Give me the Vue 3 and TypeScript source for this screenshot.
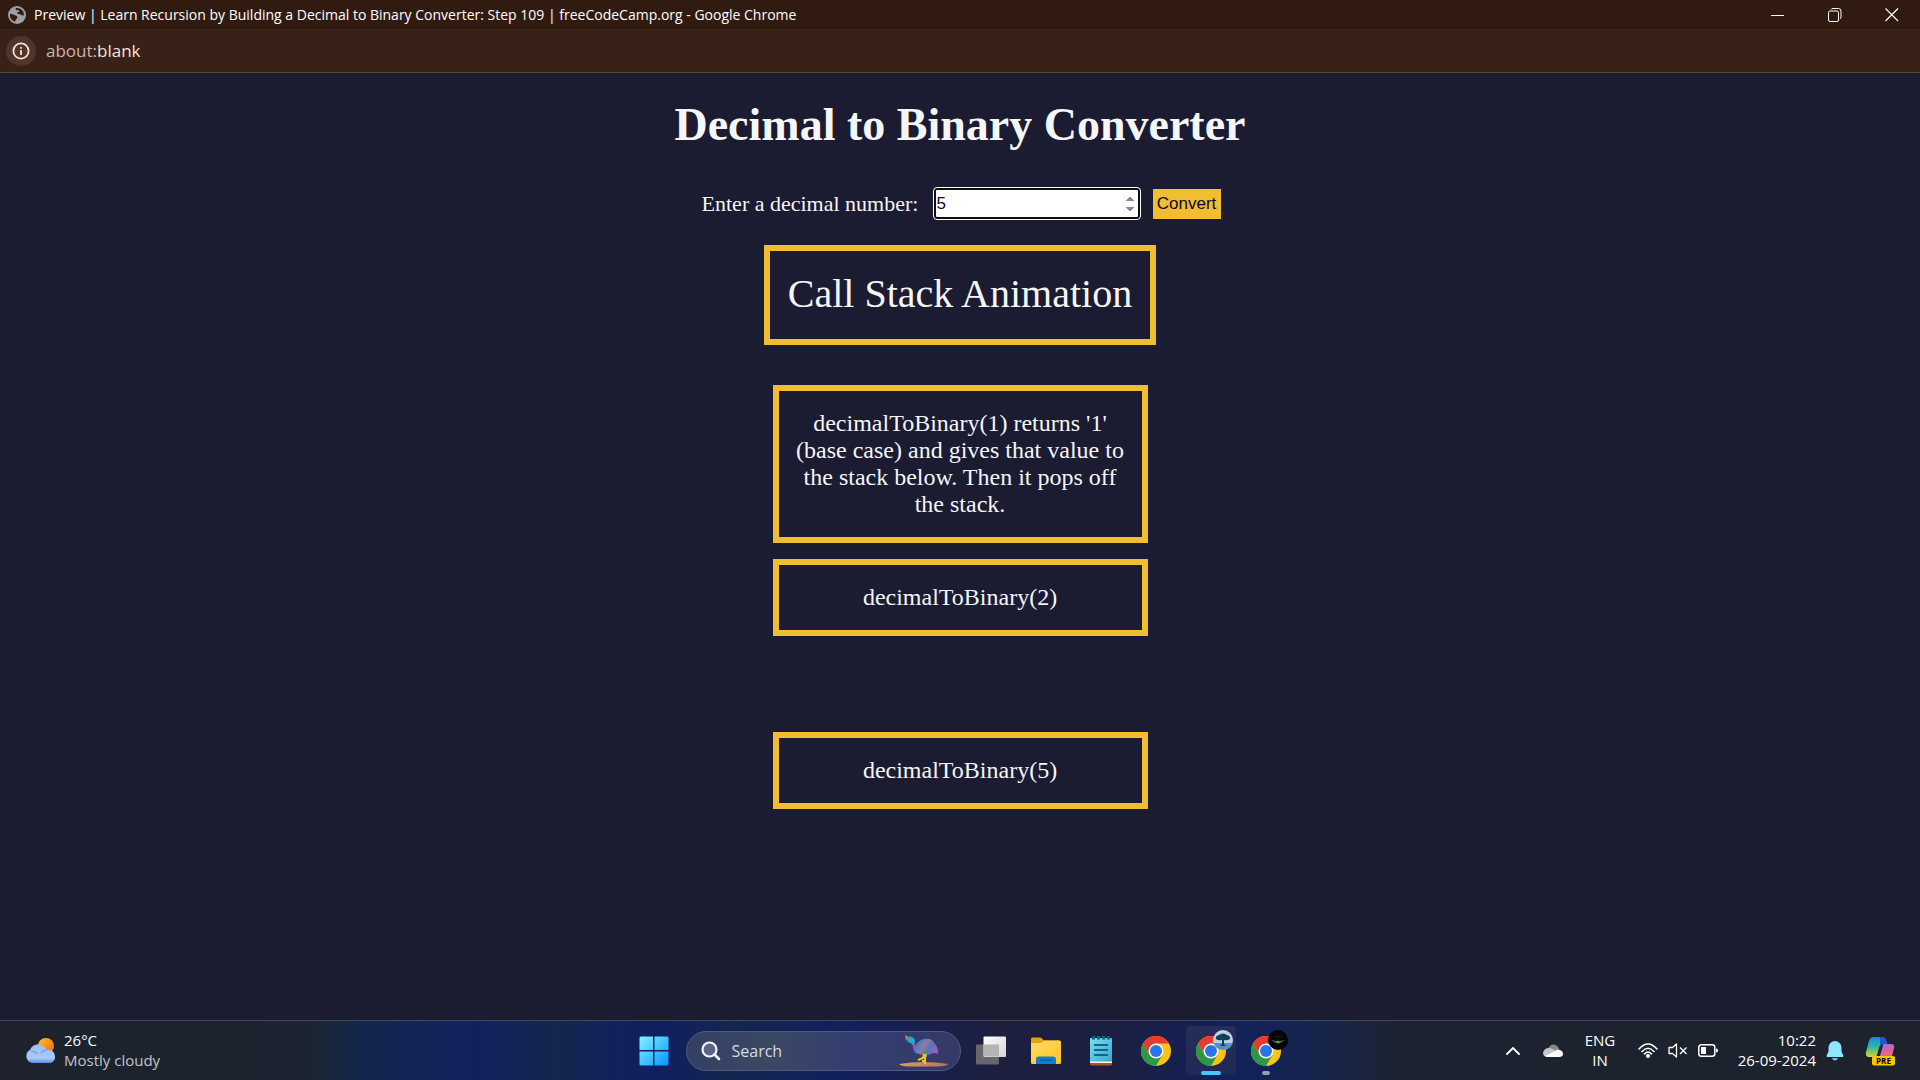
<script setup lang="ts">
import { ref } from 'vue'

interface Frame {
  id: number
  text: string
}

const decimal = ref<number>(5)

// An empty text is a frame that has already been popped off the stack.
const frames = ref<Frame[]>([
  {
    id: 1,
    text: "decimalToBinary(1) returns '1' (base case) and gives that value to the stack below. Then it pops off the stack.",
  },
  { id: 2, text: 'decimalToBinary(2)' },
  { id: 3, text: '' },
  { id: 4, text: 'decimalToBinary(5)' },
])

const chromeApps = [
  { id: 'chrome', label: 'Google Chrome', badge: '', state: '' },
  { id: 'chrome-tree', label: 'Google Chrome, profile 1', badge: 'tree', state: 'active' },
  { id: 'chrome-dark', label: 'Google Chrome, profile 2', badge: 'dark', state: 'open' },
]
</script>

<template>
  <div class="screen">
    <header class="titlebar">
      <svg class="globe" viewBox="0 0 18 18" aria-hidden="true">
        <circle cx="9" cy="9" r="9" fill="#9aa0a6" />
        <path d="M2 7.500C3 8.500 5 8 6.500 9C8 10 9.500 9.500 9.300 11.500C9 13 7.500 13 7.300 15.500C4 15 1.500 12 2 7.500ZM8 2C7 3.500 8 4.500 10 4.200C12 4 11.500 6 10 6.300C8.500 6.700 9 8 10.500 8C13 7.800 13.500 10 15.800 9.500C16.500 5 12.500 1.500 8 2Z" fill="#321b12" />
      </svg>
      <span class="window-title">Preview | Learn Recursion by Building a Decimal to Binary Converter: Step 109 | freeCodeCamp.org - Google Chrome</span>
      <div class="window-buttons">
        <button type="button" aria-label="Minimize">
          <svg viewBox="0 0 14 14"><path d="M0 7.500H13" stroke="#fff" /></svg>
        </button>
        <button type="button" aria-label="Restore">
          <svg viewBox="0 0 14 14" fill="none" stroke="#fff">
            <rect x=".5" y="3" width="10" height="10.500" rx="1.500" />
            <path d="M3 1.500Q3.500.5 5 .5H10.500Q13 .5 13 3V9Q13 10.500 11.800 11" />
          </svg>
        </button>
        <button type="button" aria-label="Close">
          <svg viewBox="0 0 14 14"><path d="M.5.5L13 13M13 .5L.5 13" stroke="#fff" stroke-width="1.200" /></svg>
        </button>
      </div>
    </header>

    <nav class="addressbar" aria-label="Address">
      <button type="button" class="site-info" aria-label="View site information">
        <svg viewBox="0 0 18 18" fill="none" stroke="#f6ddd2" stroke-width="1.800">
          <circle cx="9" cy="9" r="7.600" />
          <path d="M9 8V13M9 5V6.700" />
        </svg>
      </button>
      <span class="url"><span class="scheme">about:</span>blank</span>
    </nav>

    <main class="page">
      <h1>Decimal to Binary Converter</h1>
      <form class="converter" @submit.prevent>
        <label for="number-input">Enter a decimal number:</label>
        <input id="number-input" v-model="decimal" type="number" name="decimal" />
        <button type="submit">Convert</button>
      </form>
      <h2>Call Stack Animation</h2>
      <section class="stack" aria-label="Call stack">
        <p v-for="frame in frames" :key="frame.id" :class="['frame', { popped: !frame.text }]">{{ frame.text }}</p>
      </section>
    </main>

    <footer class="taskbar">
      <button type="button" class="weather">
        <svg viewBox="0 0 32 28" aria-hidden="true">
          <defs>
            <linearGradient id="sun" x1="0" y1="0" x2="1" y2="1"><stop stop-color="#ffc52e" /><stop offset="1" stop-color="#ec6306" /></linearGradient>
            <linearGradient id="cloud" x1="0" y1="0" x2="0" y2="1"><stop stop-color="#9cc0fa" /><stop offset=".75" stop-color="#a9c8f8" /><stop offset="1" stop-color="#5f8ae0" /></linearGradient>
          </defs>
          <circle cx="22" cy="9" r="8" fill="url(#sun)" />
          <path d="M8 26A7 7 0 0 1 6 13C8 8 13 6 17 8C20 9 22 11 23 13C28 12 31 16 31 20C31 24 28 26 25 26Z" fill="url(#cloud)" />
          <path d="M7 14Q11 14 13 17M23 13Q19 13 17 16" fill="none" stroke="#6f99e8" stroke-width="1.200" />
        </svg>
        <span class="weather-text"><span>26°C</span><span class="dim">Mostly cloudy</span></span>
      </button>

      <div class="apps">
        <button type="button" class="app" aria-label="Start">
          <svg viewBox="0 0 30 30">
            <defs><linearGradient id="start" x1="0" y1="0" x2="1" y2="1" ><stop stop-color="#83f5ff" /><stop offset="1" stop-color="#0693ff" /></linearGradient></defs>
            <path d="M2 .5H14V14H.5V2Q.5.5 2 .5ZM15.500.5H28Q29.500.5 29.500 2V14H15.500ZM.5 15.500H14V29.500H2Q.5 29.500.5 28ZM15.500 15.500H29.500V28Q29.500 29.500 28 29.500H15.500Z" fill="url(#start)" />
          </svg>
        </button>

        <div class="search">
          <svg class="magnifier" viewBox="0 0 20 20" fill="none" stroke="#f2f4fa" stroke-width="2.200" stroke-linecap="round">
            <circle cx="8.500" cy="8.500" r="7" fill="#5b6488" /><path d="M13.500 13.500L18 18" stroke-width="2.600" />
          </svg>
          <input type="text" placeholder="Search" aria-label="Search" />
          <svg class="bird" viewBox="0 0 52 34" aria-hidden="true">
            <defs>
              <linearGradient id="feather" x1="0" y1="0" x2="1" y2=".4"><stop stop-color="#7b4fb0" /><stop offset=".3" stop-color="#4e7fc2" /><stop offset=".55" stop-color="#9a7796" /><stop offset=".75" stop-color="#4f79b8" /><stop offset="1" stop-color="#9461c4" /></linearGradient>
              <linearGradient id="sand"><stop stop-color="#d9a05b" /><stop offset="1" stop-color="#bc6d5c" /></linearGradient>
            </defs>
            <path d="M1 30Q25 26 51 30Q46 33 38 32.500H10Q3 32 1 30Z" fill="url(#sand)" />
            <path d="M15 10L17 12Q21 5 27 5Q34 4 37 10Q40 13 40 20Q36 18 33 20Q27 22 21 20Q15 19 15 13Z" fill="url(#feather)" />
            <path d="M9 6Q10 1 14 3Q17 4 17 8L16 12Q14 11 13 9Q10 9 9 6Z" fill="#20abd5" />
            <path d="M7 1L11 3Q9 4 8 7Z" fill="#b98762" /><path d="M16 10L17 14" stroke="#e54067" stroke-width="1.500" />
            <path d="M26 20L25 24L20 26M28 20L27 25V30M24 27H28" fill="none" stroke="#f3c51d" stroke-width="2" />
          </svg>
        </div>

        <button type="button" class="app" aria-label="Task view">
          <svg viewBox="0 0 30 30">
            <defs><linearGradient id="pane" x2="1" y2="1"><stop stop-color="#fff" /><stop offset="1" stop-color="#d5d5da" /></linearGradient></defs>
            <rect y="8.500" width="23" height="20" rx="1" fill="#66666b" />
            <rect x="7.500" y=".5" width="22.500" height="20.500" rx="1" fill="url(#pane)" />
            <path d="M8 8.500H23V20.500H8Z" fill="#b4b4b6" />
          </svg>
        </button>

        <button type="button" class="app" aria-label="File Explorer">
          <svg viewBox="0 0 30 30">
            <defs><linearGradient id="folder" x2="1" y2="1"><stop stop-color="#ffdc69" /><stop offset="1" stop-color="#ffc321" /></linearGradient></defs>
            <path d="M0 3Q0 1.500 1.500 1.500H9Q10.500 1.500 11.500 3L13 4.500H28Q30 4.500 30 7V15H0Z" fill="#e5a312" />
            <path d="M0 7H10L13 4.500H28.500Q30 4.500 30 6V26.500Q30 28 28.500 28H1.500Q0 28 0 26.500Z" fill="url(#folder)" />
            <path d="M5 28V23Q5 20.500 8 20.500H22Q25 20.500 25 23V28Z" fill="#137ed0" /><path d="M9 24H21" stroke="#0b5598" />
          </svg>
        </button>

        <button type="button" class="app" aria-label="Notepad">
          <svg viewBox="0 0 30 30">
            <defs><linearGradient id="note" x2="1" y2="1"><stop stop-color="#79dff1" /><stop offset="1" stop-color="#36a8cb" /></linearGradient></defs>
            <path d="M4 25H26V28Q26 29.500 24.500 29.500H5.500Q4 29.500 4 28Z" fill="#a9561c" />
            <path d="M4 24H26V27H4Z" fill="#f4f4f4" />
            <path d="M5 2H25Q26 2 26 3V25.500H4V3Q4 2 5 2Z" fill="url(#note)" />
            <path d="M8 9H22M8 14H22M8 19H22" stroke="#11668c" stroke-width="1.800" />
            <path d="M7.500 0V3.500M12.500 0V3.500M17.500 0V3.500M22.500 0V3.500" stroke="#0c6486" stroke-width="3" />
          </svg>
        </button>

        <button v-for="app in chromeApps" :key="app.id" type="button" :class="['app', app.state]" :aria-label="app.label">
          <svg viewBox="0 0 30 30">
            <circle cx="15" cy="15" r="15" fill="#fbc31a" />
            <path d="M15 15L21.500 18.750L15 30A15 15 0 0 1 2 7.500L8.500 18.750Z" fill="#2a9946" />
            <path d="M15 7.500H28A15 15 0 0 0 2 7.500L8.500 18.750L15 15Z" fill="#e33c30" />
            <circle cx="15" cy="15" r="7.500" fill="#fff" /><circle cx="15" cy="15" r="6" fill="#2a73e8" />
          </svg>
          <svg v-if="app.badge === 'tree'" class="badge" viewBox="0 0 20 20">
            <circle cx="10" cy="10" r="10" fill="#b8d4e6" />
            <path d="M.5 13H19.500A10 10 0 0 1 .5 13Z" fill="#5a8fc4" />
            <path d="M3 9Q2 6 6 5Q10 2 14 5Q18 6 17 9Q14 11 11 10L11 14L13 16H7L9 14V10Q5 11 3 9Z" fill="#173e55" />
          </svg>
          <svg v-if="app.badge === 'dark'" class="badge" viewBox="0 0 20 20">
            <circle cx="10" cy="10" r="10" fill="#030506" />
            <path d="M3 10L8 11H12L17 10L12 13H8Z" fill="#1d8f4e" /><path d="M6 7Q10 6 14 7" fill="none" stroke="#1b2221" /><circle cx="10" cy="12" r="1.500" fill="#a46a60" />
          </svg>
        </button>
      </div>

      <div class="tray">
        <button type="button" class="chevron" aria-label="Show hidden icons">
          <svg viewBox="0 0 14 8" fill="none" stroke="#fff" stroke-width="1.800" stroke-linecap="round"><path d="M1 7L7 1L13 7" /></svg>
        </button>
        <button type="button" class="onedrive" aria-label="OneDrive">
          <svg viewBox="0 0 20 14">
            <path d="M5 5Q7 0 11 .5Q15 1 16 5L12 8Z" fill="#85878e" />
            <path d="M4 13Q0 12.500 0 9Q1 4 6 4Q9 4 11 6L15 8L5 13Z" fill="#c4c5c9" />
            <path d="M2 12L12 7Q14 4.500 17 6Q20 7 20 10Q20 13 16 13H4Z" fill="#fff" />
          </svg>
        </button>
        <button type="button" class="language"><span>ENG</span><span>IN</span></button>
        <button type="button" class="status" aria-label="Network, volume and battery">
          <svg viewBox="0 0 20 15" fill="none" stroke="#fff" stroke-width="1.600" stroke-linecap="round">
            <path d="M1 6Q10-4 19 6M4 8.500Q10 2 16 8.500M6.500 11Q10 7 13.500 11" /><circle cx="10" cy="13" r="1.200" fill="#fff" />
          </svg>
          <svg viewBox="0 0 20 15" fill="none" stroke="#fff" stroke-width="1.300" stroke-linejoin="round">
            <path d="M8.500 1V14L4.500 10.500H1V4.500H4.500ZM12 4.500L18.500 11M18.500 4.500L12 11" />
          </svg>
          <svg viewBox="0 0 20 15">
            <rect x=".8" y="1.800" width="16" height="11.400" rx="2.500" fill="none" stroke="#fff" stroke-width="1.500" />
            <path d="M3 4H8V11H3ZM18 5.500Q20 5.500 20 7.500Q20 9.500 18 9.500Z" fill="#fff" />
          </svg>
        </button>
        <button type="button" class="clock"><span>10:22</span><span>26-09-2024</span></button>
        <button type="button" class="bell" aria-label="Notifications">
          <svg viewBox="0 0 18 20" fill="#8fe7ff"><path d="M9 0A6.500 6.500 0 0 1 15.500 6.500V10.500L17.500 15Q17.500 16 16.500 16H1.500Q.5 16 .5 15L2.500 10.500V6.500A6.500 6.500 0 0 1 9 0Z" /><path d="M6 17H12Q11.500 19.500 9 19.500Q6.500 19.500 6 17Z" fill="#69bbd9" /></svg>
        </button>
        <button type="button" class="copilot" aria-label="Copilot preview">
          <svg viewBox="0 0 30 30">
            <defs>
              <linearGradient id="wave" x2="0" y2="1"><stop stop-color="#128ce2" /><stop offset=".5" stop-color="#35b5a0" /><stop offset="1" stop-color="#d7d632" /></linearGradient>
              <linearGradient id="petal" y1="0" x2=".4" y2="1"><stop stop-color="#9c63ef" /><stop offset="1" stop-color="#f3677c" /></linearGradient>
            </defs>
            <path d="M14 1H18Q20 1 21 4L22 8H18Q15 8 14 12L12 19Q11 21 8 21H4Q0 21 1 16L4 5Q5 1 9 1Z" fill="url(#wave)" />
            <path d="M15 1H18Q20 1 21 4L22 8H18Q16 8 15 10Z" fill="#2354d6" />
            <path d="M18 8H26Q30 8 29 12L27 20H13L15 18Z" fill="url(#petal)" /><path d="M18 8Q16 8 14.500 13L12.500 20H15L18 9Z" fill="#202632" />
            <rect x="7" y="20" width="23" height="9.500" rx="2" fill="#fdc500" />
            <text x="18.500" y="28" text-anchor="middle" class="pre">PRE</text>
          </svg>
        </button>
      </div>
    </footer>
  </div>
</template>

<style>
body {
  margin: 0;
  background: #1b1b32;
}
</style>

<style scoped>
.screen {
  display: flex;
  flex-direction: column;
  min-height: 100vh;
  font-family: 'Open Sans', 'Noto Sans', sans-serif;
  color: #fff;
}

button {
  margin: 0;
  padding: 0;
  border: 0;
  background: none;
  color: inherit;
  font: inherit;
}

svg {
  display: block;
}

.titlebar {
  display: flex;
  align-items: center;
  height: 29px;
  padding-left: 8px;
  background: #311b11;
}

.globe {
  width: 18px;
  height: 18px;
}

.window-title {
  flex: 1;
  margin-left: 8px;
  font-size: 14px;
  line-height: 20px;
  white-space: nowrap;
}

.window-buttons {
  display: flex;
}

.window-buttons button {
  display: grid;
  place-items: center;
  width: 57px;
  height: 29px;
}

.window-buttons svg {
  width: 14px;
  height: 14px;
}

.addressbar {
  display: flex;
  align-items: center;
  gap: 10px;
  height: 42px;
  padding-left: 6px;
  border-top: 1px solid #3b251b;
  border-bottom: 1px solid #5b4639;
  background: #382117;
}

.site-info {
  display: grid;
  place-items: center;
  width: 30px;
  height: 30px;
  border-radius: 50%;
  background: #50352a;
}

.site-info svg {
  width: 18px;
  height: 18px;
}

.url {
  font-size: 17px;
  line-height: 24px;
  color: #f6e3da;
}

.scheme {
  color: #cbb5aa;
}

.page {
  display: flex;
  flex: 1;
  flex-direction: column;
  align-items: center;
  padding: 25px 16px;
  background: #1b1b32;
  color: #f5f6f7;
  font-family: 'Liberation Serif', 'Times New Roman', serif;
}

h1 {
  margin: 0 0 36px;
  font-size: 46px;
  line-height: 53px;
}

.converter {
  display: flex;
  align-items: center;
  gap: 12px;
  margin-bottom: 25px;
}

.converter label {
  min-width: 221px;
  font-size: 22px;
  line-height: 26px;
  text-align: center;
}

.converter input {
  box-sizing: border-box;
  width: 206px;
  height: 31px;
  margin: 1px;
  padding: 0 0 0 1px;
  border: 2px solid #101010;
  border-radius: 3px;
  outline: 1px solid #fff;
  background: #fff;
  color: #0a0a23;
  font: 17px 'Liberation Sans', Arial, sans-serif;
}

.converter input::-webkit-inner-spin-button {
  width: 18px;
  height: 20px;
  opacity: 1;
}

.converter button {
  width: 68px;
  height: 30px;
  background: #f1be32;
  color: #0a0a23;
  font: 17px 'Liberation Sans', Arial, sans-serif;
}

h2 {
  margin: 0 0 40px;
  padding: 20px 18px 22px;
  border: 6px solid #f1be32;
  font-size: 40px;
  font-weight: 400;
  line-height: 46px;
}

.stack {
  display: flex;
  flex-direction: column;
  gap: 16px;
  width: 100%;
  max-width: 375px;
}

.frame {
  margin: 0;
  padding: 19px 16px;
  border: 6px solid #f1be32;
  font-size: 24px;
  line-height: 27px;
  text-align: center;
}

.frame.popped {
  box-sizing: border-box;
  height: 64px;
  visibility: hidden;
}

.taskbar {
  display: grid;
  grid-template-columns: 1fr auto 1fr;
  align-items: center;
  height: 59px;
  border-top: 1px solid #44475a;
  background: linear-gradient(90deg, #1d222c 0%, #1b2430 16%, #14264f 19%, #12215c 25%, #15264f 29%, #101f60 34%, #14254f 38%, #12205c 44%, #1d1f3f 52%, #1c1f42 58%, #12215a 64%, #152450 68%, #1c2330 73%, #1d222c 100%);
  font-size: 15px;
  line-height: 20px;
}

.weather {
  display: flex;
  align-items: center;
  justify-self: start;
  gap: 8px;
  margin-left: 24px;
  text-align: left;
}

.weather svg {
  width: 32px;
  height: 28px;
}

.weather-text,
.language,
.clock {
  display: flex;
  flex-direction: column;
  padding-bottom: 2px;
}

.dim {
  color: #c3c5c9;
}

.apps {
  display: flex;
  align-items: center;
}

.app {
  position: relative;
  display: grid;
  place-items: center;
  width: 55px;
  height: 50px;
}

.app svg {
  width: 30px;
  height: 30px;
}

.app.active {
  background: linear-gradient(#262d58, #202955) center / 50px 50px no-repeat;
  clip-path: inset(0 2px round 6px);
}

.app.active::after,
.app.open::after {
  position: absolute;
  bottom: 1px;
  width: 20px;
  height: 4px;
  border-radius: 2px;
  background: #4cc2ff;
  content: '';
}

.app.open::after {
  width: 8px;
  background: #9a9bb0;
}

.app .badge {
  position: absolute;
  top: 4px;
  right: 6px;
  width: 20px;
  height: 20px;
}

.search {
  display: flex;
  align-items: center;
  box-sizing: border-box;
  width: 275px;
  height: 40px;
  margin: 0 3px 0 4px;
  padding: 0 10px 0 14px;
  border: 1px solid #505984;
  border-radius: 20px;
  background: linear-gradient(90deg, #343f63, #3b4862 30%, #333e70 60%, #343a67);
}

.search input {
  flex: 1;
  min-width: 0;
  padding: 0 0 0 11px;
  border: 0;
  outline: 0;
  background: none;
  color: #fff;
  font: 16px 'Open Sans', 'Noto Sans', sans-serif;
}

.search input::placeholder {
  color: #d5d9e4;
}

.magnifier {
  width: 20px;
  height: 20px;
}

.bird {
  width: 52px;
  height: 34px;
}

.tray {
  display: flex;
  align-items: center;
  justify-self: end;
  margin-right: 25px;
}

.chevron svg {
  width: 14px;
  height: 8px;
}

.onedrive {
  margin-left: 23px;
}

.onedrive svg {
  width: 20px;
  height: 14px;
}

.language {
  align-items: center;
  width: 32px;
  margin-left: 21px;
}

.status {
  display: flex;
  gap: 10px;
  margin-left: 22px;
}

.status svg {
  width: 20px;
  height: 15px;
}

.clock {
  align-items: flex-end;
  width: 80px;
  margin-left: 18px;
}

.bell {
  margin-left: 10px;
}

.bell svg {
  width: 18px;
  height: 20px;
}

.copilot {
  margin-left: 21px;
}

.copilot svg {
  width: 30px;
  height: 30px;
}

.pre {
  font: 700 8px 'Open Sans', sans-serif;
}
</style>
